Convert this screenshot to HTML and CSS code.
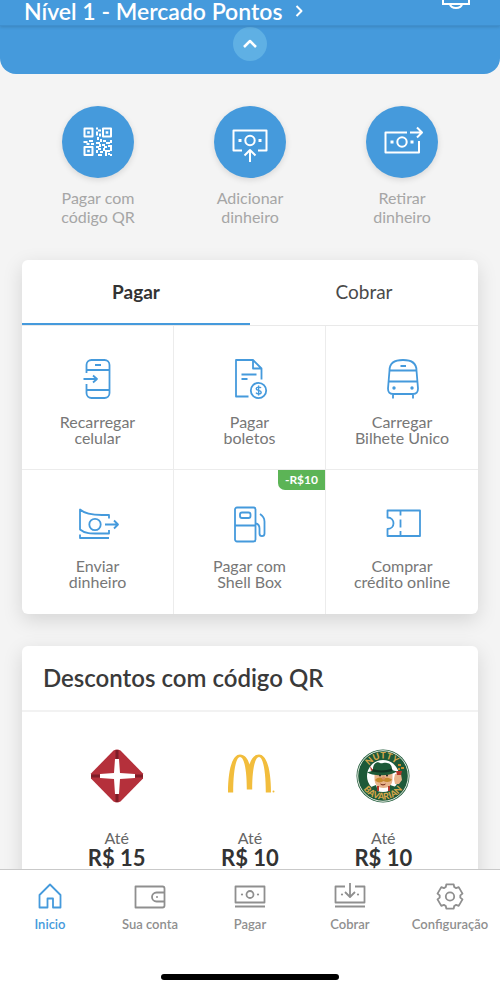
FILE: index.html
```html
<!DOCTYPE html>
<html lang="pt-BR">
<head>
<meta charset="utf-8">
<meta name="viewport" content="width=device-width, initial-scale=1">
<title>Mercado Pontos</title>
<link rel="stylesheet" href="styles.css">
</head>
<body>
<div class="app">
  <header class="topbar">
    <a class="level" href="#pontos">Nível 1 - Mercado Pontos
      <svg class="chevron" viewBox="0 0 8 14" aria-hidden="true"><path d="M1.500 2l5 5-5 5"/></svg>
    </a>
    <button class="bell" type="button" aria-label="Notificações">
      <svg viewBox="0 0 28 28" aria-hidden="true"><path d="M5 14V8a9 9 0 0 1 18 0v6h4v9H1v-9zM8 23a6 4 0 0 0 12 0"/></svg>
    </button>
  </header>

  <main class="content">
    <div class="panel">
      <button class="collapse" type="button" aria-label="Recolher">
        <svg viewBox="0 0 34 34" aria-hidden="true"><path d="M11 20l6-6 6 6"/></svg>
      </button>
    </div>

    <nav class="actions" aria-label="Ações">
      <a class="action" href="#qr">
        <span class="disc">
          <svg viewBox="0 0 72 72" aria-hidden="true">
            <path d="M22.500 22.500h8v8h-8zM41 22.500h8v8h-8zM22.500 41h8v8h-8z"/>
            <path class="solid" d="M25.200 25.200h2.600v2.600h-2.600zM43.700 25.200h2.600v2.600h-2.600zM25.200 43.700h2.600v2.600h-2.600zM34 21.500h2v2h-2zM36 23.500h3v2h-3zM34 25.500h2v4h-2zM37 27.500h2v3h-2zM35 31h2v3h-2zM21.500 35h4v2h-4zM24.500 37h3v2h-3zM27 34h4v2h-4zM29 37h3v2h-3zM34 36h4v2h-4zM38 33h2v3h-2zM41 34h3v2h-3zM44 36h4v2h-4zM48 34h2v3h-2zM34 40h3v2h-3zM37 38h2v3h-2zM40 38h3v2h-3zM42 40h3v2h-3zM46 39h4v2h-4zM34 44h2v3h-2zM36 42h3v2h-3zM38 45h3v2h-3zM36 48h4v2h-4zM41 42h2v3h-2zM43 44h5v2h-5zM43 46h2v4h-2zM46 47h2v2h-2zM48 41h2v4h-2zM48 48h2v2h-2z"/>
          </svg>
        </span>
        <span>Pagar com<br>código QR</span>
      </a>
      <a class="action" href="#adicionar">
        <span class="disc">
          <svg viewBox="0 0 72 72" aria-hidden="true">
            <path d="M28 44.500h-8.500v-20h33v20H44M36 56V44M30.500 49.500l5.500-5.500 5.500 5.500"/>
            <circle cx="36" cy="34.500" r="4.700"/>
            <path class="solid" d="M24.500 33h3v3h-3zM44.500 33h3v3h-3z"/>
          </svg>
        </span>
        <span>Adicionar<br>dinheiro</span>
      </a>
      <a class="action" href="#retirar">
        <span class="disc">
          <svg viewBox="0 0 72 72" aria-hidden="true">
            <path d="M41 26.500H19.500v20H53V35M44 26.500h12M51 21.500l5 5-5 5"/>
            <circle cx="36" cy="36" r="4.700"/>
            <path class="solid" d="M24.500 34.500h3v3h-3zM44.500 34.500h3v3h-3z"/>
          </svg>
        </span>
        <span>Retirar<br>dinheiro</span>
      </a>
    </nav>

    <section class="card services">
      <div class="tabs" role="tablist">
        <button class="tab tab-active" type="button" role="tab" aria-selected="true">Pagar</button>
        <button class="tab" type="button" role="tab" aria-selected="false">Cobrar</button>
      </div>
      <div class="grid">
        <a class="cell" href="#celular">
          <svg class="icon" viewBox="0 0 40 40" aria-hidden="true"><path d="M8.500 14V6a5 5 0 0 1 5-5h13a5 5 0 0 1 5 5v28a5 5 0 0 1-5 5h-13a5 5 0 0 1-5-5v-9M8.500 11h23M8.500 31h23M17 6h6M5.500 20h13M15 16.500l4 3.500-4 3.500"/></svg>
          <span>Recarregar<br>celular</span>
        </a>
        <a class="cell" href="#boletos">
          <svg class="icon" viewBox="0 0 40 40" aria-hidden="true"><path d="M18.500 37.500H6V1h17l8.500 8.500v11M23 1v8.500h8.500M11.500 15.500h15M11.500 20h6"/><circle cx="28.500" cy="31.500" r="7.700"/><path class="thin" d="M31 29c-.8-1.300-4.800-1.300-4.800.7 0 2.300 5 1 5 3.500 0 2.200-4.200 2.200-5.200.5M28.600 26.500v10"/></svg>
          <span>Pagar<br>boletos</span>
        </a>
        <a class="cell" href="#bilhete">
          <svg class="icon" viewBox="0 0 40 40" aria-hidden="true"><path d="M7.500 11.500C7.500 4 12.500 1 21 1s13.500 3 13.500 10.500l1.500 18c0 3.500-2 5.500-5 5.500H11c-3 0-5-2-5-5.500zM7.500 11.500h27M6.500 22.500h29M18.500 7H24M11 35v4.500M31 35v4.500"/><circle class="dot" cx="12" cy="29" r="1.700"/><circle class="dot" cx="30" cy="29" r="1.700"/></svg>
          <span>Carregar<br>Bilhete Único</span>
        </a>
        <a class="cell" href="#enviar">
          <svg class="icon" viewBox="0 0 40 40" aria-hidden="true"><path d="M31 15.500V12h-7C15 12 7 11 2 6.500v20C7 31 15 30.500 24 30.500h7V27M2 31.500V35h29M27 21.500h13M36 17.500l4 4-4 4"/><circle cx="17" cy="21.500" r="5.700"/></svg>
          <span>Enviar<br>dinheiro</span>
        </a>
        <a class="cell" href="#shell">
          <span class="badge">-R$10</span>
          <svg class="icon" viewBox="0 0 40 40" aria-hidden="true"><rect x="5" y="4.500" width="20.500" height="34" rx="2"/><rect x="10" y="9.500" width="10.500" height="5.500" rx="2"/><path d="M5 22.500h20.500M25.500 20.500c4 .3 4 3 4 5v5c0 3.500 5 3.500 5 0v-12c0-3-1.500-5.500-4.500-7.500"/></svg>
          <span>Pagar com<br>Shell Box</span>
        </a>
        <a class="cell" href="#credito">
          <svg class="icon" viewBox="0 0 40 40" aria-hidden="true"><path d="M5.500 7.500h32.500V33H5.500v-7c8 0 8-11.500 0-11.500zM18.500 7.500v5M18.500 16.500v8M18.500 28v5"/></svg>
          <span>Comprar<br>crédito online</span>
        </a>
      </div>
    </section>

    <section class="card discounts">
      <h2 class="heading">Descontos com código QR</h2>
      <div class="offers">
        <a class="offer" href="#oferta-1">
          <svg class="logo" viewBox="0 0 54 54" aria-hidden="true">
            <path fill="#b5303b" d="M23.500 1.500Q27-.5 30.500 1.500L53 24.500v5L30.500 52.500Q27 54.500 23.500 52.500L1 29.500v-5z"/>
            <path fill="#7e1d28" d="M25.500 1h3v9h-3zM25.500 44h3v9h-3zM1 25.500h9v3H1zM44 25.500h9v3h-9z"/>
            <path fill="#fff" d="M25 10h4l1 14 15 1v4l-15 1-1 15h-4l-1-15-14-1v-4l14-1z"/>
          </svg>
          <span class="upto">Até</span>
          <strong class="amount">R$ 15</strong>
        </a>
        <a class="offer" href="#oferta-2">
          <svg class="logo" viewBox="0 0 54 54" aria-hidden="true">
            <path fill="#f2bd3c" d="M5 43.500C5 20 9.500 5.500 17 5.500c4.500 0 7.800 4 9.500 10 1.700-6 5-10 9.500-10 7.500 0 12 14.500 12 38h-5.200C42.800 22 40 8 36 8c-4 0-6.800 12-6.800 32.500h-5.400C23.800 20 21 8 17 8c-4 0-6.800 14-6.800 35.500z"/>
            <circle cx="50.500" cy="42.500" r="1" fill="#f2bd3c"/>
          </svg>
          <span class="upto">Até</span>
          <strong class="amount">R$ 10</strong>
        </a>
        <a class="offer" href="#oferta-3">
          <svg class="logo" viewBox="0 0 54 54" aria-hidden="true">
            <defs>
              <path id="arc-top" d="M9.500 27a17.500 17.500 0 0 1 35 0"/>
              <path id="arc-bottom" d="M3.500 27a23.500 23.500 0 0 0 47 0"/>
            </defs>
            <circle cx="27" cy="27" r="26.500" fill="#1d5938"/>
            <circle cx="27" cy="27" r="25.300" fill="none" stroke="#e9efe5" stroke-width="1"/>
            <circle cx="27" cy="27" r="16" fill="#fff"/>
            <path fill="#e8b48b" d="M18.500 22h18v8c0 6-4 9-9 9s-9-3-9-9z"/>
            <path fill="#1d5938" d="M11 23c4 0 5-1 6-3 0-5 4-8 7-6 2 1 4-1 7 0 3 0 5 3 5 6 1 2 3 2 5 2-4 5-25 6-30 1z"/>
            <path fill="#123524" d="M16.500 20c6 2 13 2 19.500-.500v2.500c-7 2-13 2-20 .5z"/>
            <path fill="#b5372b" d="M14 17l3 4-2 1z"/>
            <path fill="#c58a2c" d="M19 31c3-3 6-3 8-1.500 3-1.500 6-1 9 1-2 3-6 3-8.500 1.500C25 34 21 34 19 31z"/>
            <path fill="#7c3424" d="M24 34.500c2 1 4 1 6 0-1 2.500-5 2.500-6 0z"/>
            <circle cx="24" cy="26.500" r="1" fill="#222"/><circle cx="31" cy="26.500" r="1" fill="#222"/>
            <circle cx="27.500" cy="29" r="1.800" fill="#d98f68"/>
            <path fill="#1d5938" d="M15 38l5-2 2 6-3 1zM40 38l-6-2-1 6 3 1z"/>
            <path fill="#b5372b" d="M21 37h2v5h-2zM32 37h2v5h-2z"/>
            <path fill="#e8b48b" d="M39 25h6l1 6-3 4h-4l-1-5z"/>
            <path fill="#b5372b" d="M40 22h6l-1 4h-4z"/>
            <path fill="#c58a2c" d="M42 15h3v2h-3zM45 18h3v2h-3zM42 19h2v2h-2z"/>
            <text class="logo-text"><textPath href="#arc-top" startOffset="48%" text-anchor="middle">NUTTY</textPath></text>
            <text class="logo-text"><textPath href="#arc-bottom" startOffset="50%" text-anchor="middle">BAVARIAN</textPath></text>
          </svg>
          <span class="upto">Até</span>
          <strong class="amount">R$ 10</strong>
        </a>
      </div>
    </section>
  </main>

  <footer class="bottom">
    <nav class="tabbar" aria-label="Principal">
      <a class="item item-active" href="#inicio">
        <svg viewBox="0 0 36 36" aria-hidden="true"><path d="M7.500 17L18 6.500 28.500 17v12.500h-7.500v-9h-5.500v9h-8z"/></svg>
        <span>Inicio</span>
      </a>
      <a class="item" href="#conta">
        <svg viewBox="0 0 36 36" aria-hidden="true"><path d="M3.500 8.500h27a2 2 0 0 1 2 2v17a2 2 0 0 1-2 2h-27zM32.500 14.500h-8a4.500 4.500 0 0 0 0 9h8"/><circle class="dot" cx="25" cy="19" r="1"/></svg>
        <span>Sua conta</span>
      </a>
      <a class="item" href="#pagar">
        <svg viewBox="0 0 36 36" aria-hidden="true"><path d="M3.500 8.500h29v16h-29zM3 28.500h30"/><circle cx="18" cy="16.500" r="3.500"/><circle class="dot" cx="10" cy="16.500" r="1.100"/><circle class="dot" cx="26" cy="16.500" r="1.100"/></svg>
        <span>Pagar</span>
      </a>
      <a class="item" href="#cobrar">
        <svg viewBox="0 0 36 36" aria-hidden="true"><path d="M13 8.500H3.500v16h29v-16H23M3 28.500h30M18 5v14M13 14l5 5 5-5"/><circle class="dot" cx="10" cy="16.500" r="1.100"/><circle class="dot" cx="26" cy="16.500" r="1.100"/></svg>
        <span>Cobrar</span>
      </a>
      <a class="item" href="#configuracao">
        <svg viewBox="0 0 36 36" aria-hidden="true"><path d="M14.300 6.300h7.400L22.200 9l1.900 1.100 2.600-1 3.800 6.500-2.200 1.800v2.200l2.200 1.800-3.800 6.500-2.600-1-1.900 1.100-.5 2.700h-7.400l-.5-2.700-1.900-1.100-2.600 1-3.800-6.500 2.200-1.800v-2.200l-2.200-1.800 3.800-6.500 2.600 1L13.800 9z"/><circle cx="18" cy="18.500" r="4.200"/></svg>
        <span>Configuração</span>
      </a>
    </nav>
    <div class="home-indicator"></div>
  </footer>
</div>
</body>
</html>
```
FILE: styles.css
```css
* {
  box-sizing: border-box;
}

body {
  margin: 0;
  background: #f4f4f4;
  color: #3a3a3a;
  font-family: Lato, "Liberation Sans", sans-serif;
}

a {
  color: inherit;
  text-decoration: none;
}

button {
  margin: 0;
  padding: 0;
  border: 0;
  background: none;
  color: inherit;
  font: inherit;
}

svg {
  display: block;
  fill: none;
  stroke-linejoin: round;
}

.app {
  display: flex;
  flex-direction: column;
  height: 100vh;
}

.topbar {
  display: flex;
  flex: none;
  align-items: flex-end;
  justify-content: space-between;
  height: 26px;
  padding: 0 30px 0 24px;
  background: #459adc;
  border-bottom: 1px solid #3f8fce;
  box-shadow: 0 1px 3px rgba(0, 0, 0, 0.15);
  color: #fff;
  z-index: 1;
}

.level {
  display: flex;
  align-items: center;
  gap: 13px;
  font-size: 23px;
  font-weight: 600;
  line-height: 28px;
  white-space: nowrap;
}

.chevron {
  width: 8px;
  height: 14px;
  stroke: #fff;
  stroke-width: 2;
}

.bell {
  margin-bottom: 16px;
}

.bell svg {
  width: 28px;
  height: 28px;
  stroke: #fff;
  stroke-linejoin: miter;
  stroke-width: 2;
}

.content {
  flex: 1;
  min-height: 0;
  overflow-y: auto;
  scrollbar-width: none;
}

.panel {
  display: flex;
  justify-content: center;
  height: 48px;
  padding-top: 1px;
  background: #459adc;
  border-radius: 0 0 16px 16px;
}

.collapse {
  width: 34px;
  height: 34px;
  border-radius: 50%;
  background: #5fb0e4;
}

.collapse svg {
  stroke: #fff;
  stroke-width: 2.5;
}

.actions {
  display: grid;
  grid-template-columns: repeat(3, 1fr);
  padding: 32px 22px 0;
}

.action {
  display: flex;
  flex-direction: column;
  align-items: center;
  gap: 10px;
  color: #a6a6a6;
  font-size: 16px;
  line-height: 19px;
  text-align: center;
}

.disc {
  width: 72px;
  height: 72px;
  border-radius: 50%;
  background: #459adc;
  box-shadow: 0 2px 6px rgba(0, 0, 0, 0.12);
}

.disc svg {
  stroke: #fff;
  stroke-width: 2;
}

.disc .solid {
  fill: #fff;
  stroke: none;
}

.card {
  margin: 0 22px;
  background: #fff;
  border-radius: 6px;
  box-shadow: 0 6px 20px rgba(0, 0, 0, 0.13);
}

.services {
  margin-top: 34px;
}

.tabs {
  display: flex;
  border-bottom: 1px solid #e9e9e9;
}

.tab {
  flex: 1;
  height: 65px;
  padding-bottom: 2px;
  color: #4a4a4a;
  font-size: 19px;
}

.tab-active {
  color: #333;
  font-weight: 700;
  box-shadow: inset 0 -2px #459adc;
}

.grid {
  display: grid;
  grid-template-columns: repeat(3, 1fr);
}

.cell {
  position: relative;
  display: flex;
  flex-direction: column;
  align-items: center;
  gap: 15px;
  height: 144px;
  padding-top: 33px;
  border-right: 1px solid #ececec;
  color: #777;
  font-size: 16px;
  line-height: 16px;
  text-align: center;
}

.cell:nth-child(3n) {
  border-right: 0;
}

.cell:nth-child(-n+3) {
  border-bottom: 1px solid #ececec;
}

.icon {
  width: 40px;
  height: 40px;
  overflow: visible;
  stroke: #459adc;
  stroke-width: 1.8;
}

.icon .thin {
  stroke-width: 1.4;
}

.icon .dot {
  fill: #459adc;
  stroke: none;
}

.badge {
  position: absolute;
  top: 0;
  right: 0;
  padding: 2px 7px;
  border-bottom-left-radius: 7px;
  background: #5cb456;
  color: #fff;
  font-size: 12px;
  font-weight: 700;
}

.discounts {
  margin-top: 32px;
}

.heading {
  margin: 0;
  padding: 18px 21px;
  border-bottom: 2px solid #f2f2f2;
  font-size: 24px;
  font-weight: 600;
  line-height: 28px;
}

.offers {
  display: grid;
  grid-template-columns: repeat(3, 1fr);
  padding: 37px 28px 32px;
}

.offer {
  display: flex;
  flex-direction: column;
  align-items: center;
}

.logo {
  width: 54px;
  height: 54px;
  margin-bottom: 26px;
}

.logo-text {
  fill: #d5a64a;
  font-size: 9px;
  font-weight: 900;
}

.upto {
  color: #666;
  font-size: 16px;
  line-height: 18px;
}

.amount {
  color: #333;
  font-size: 22px;
  line-height: 22px;
}

.bottom {
  flex: none;
  padding-bottom: 10px;
  border-top: 1px solid #c9c9c9;
  background: #fff;
}

.tabbar {
  display: grid;
  grid-template-columns: repeat(5, 1fr);
  padding: 8px 0 41px;
}

.item {
  display: flex;
  flex-direction: column;
  align-items: center;
  gap: 1px;
  color: #8f8f8f;
  font-size: 13px;
  font-weight: 600;
  line-height: 18px;
}

.item-active {
  color: #459adc;
}

.item svg {
  width: 36px;
  height: 36px;
  stroke: currentColor;
  stroke-width: 1.8;
}

.item .dot {
  fill: currentColor;
  stroke: none;
}

.home-indicator {
  width: 178px;
  height: 6px;
  margin: 0 auto;
  border-radius: 3px;
  background: #000;
}
```
